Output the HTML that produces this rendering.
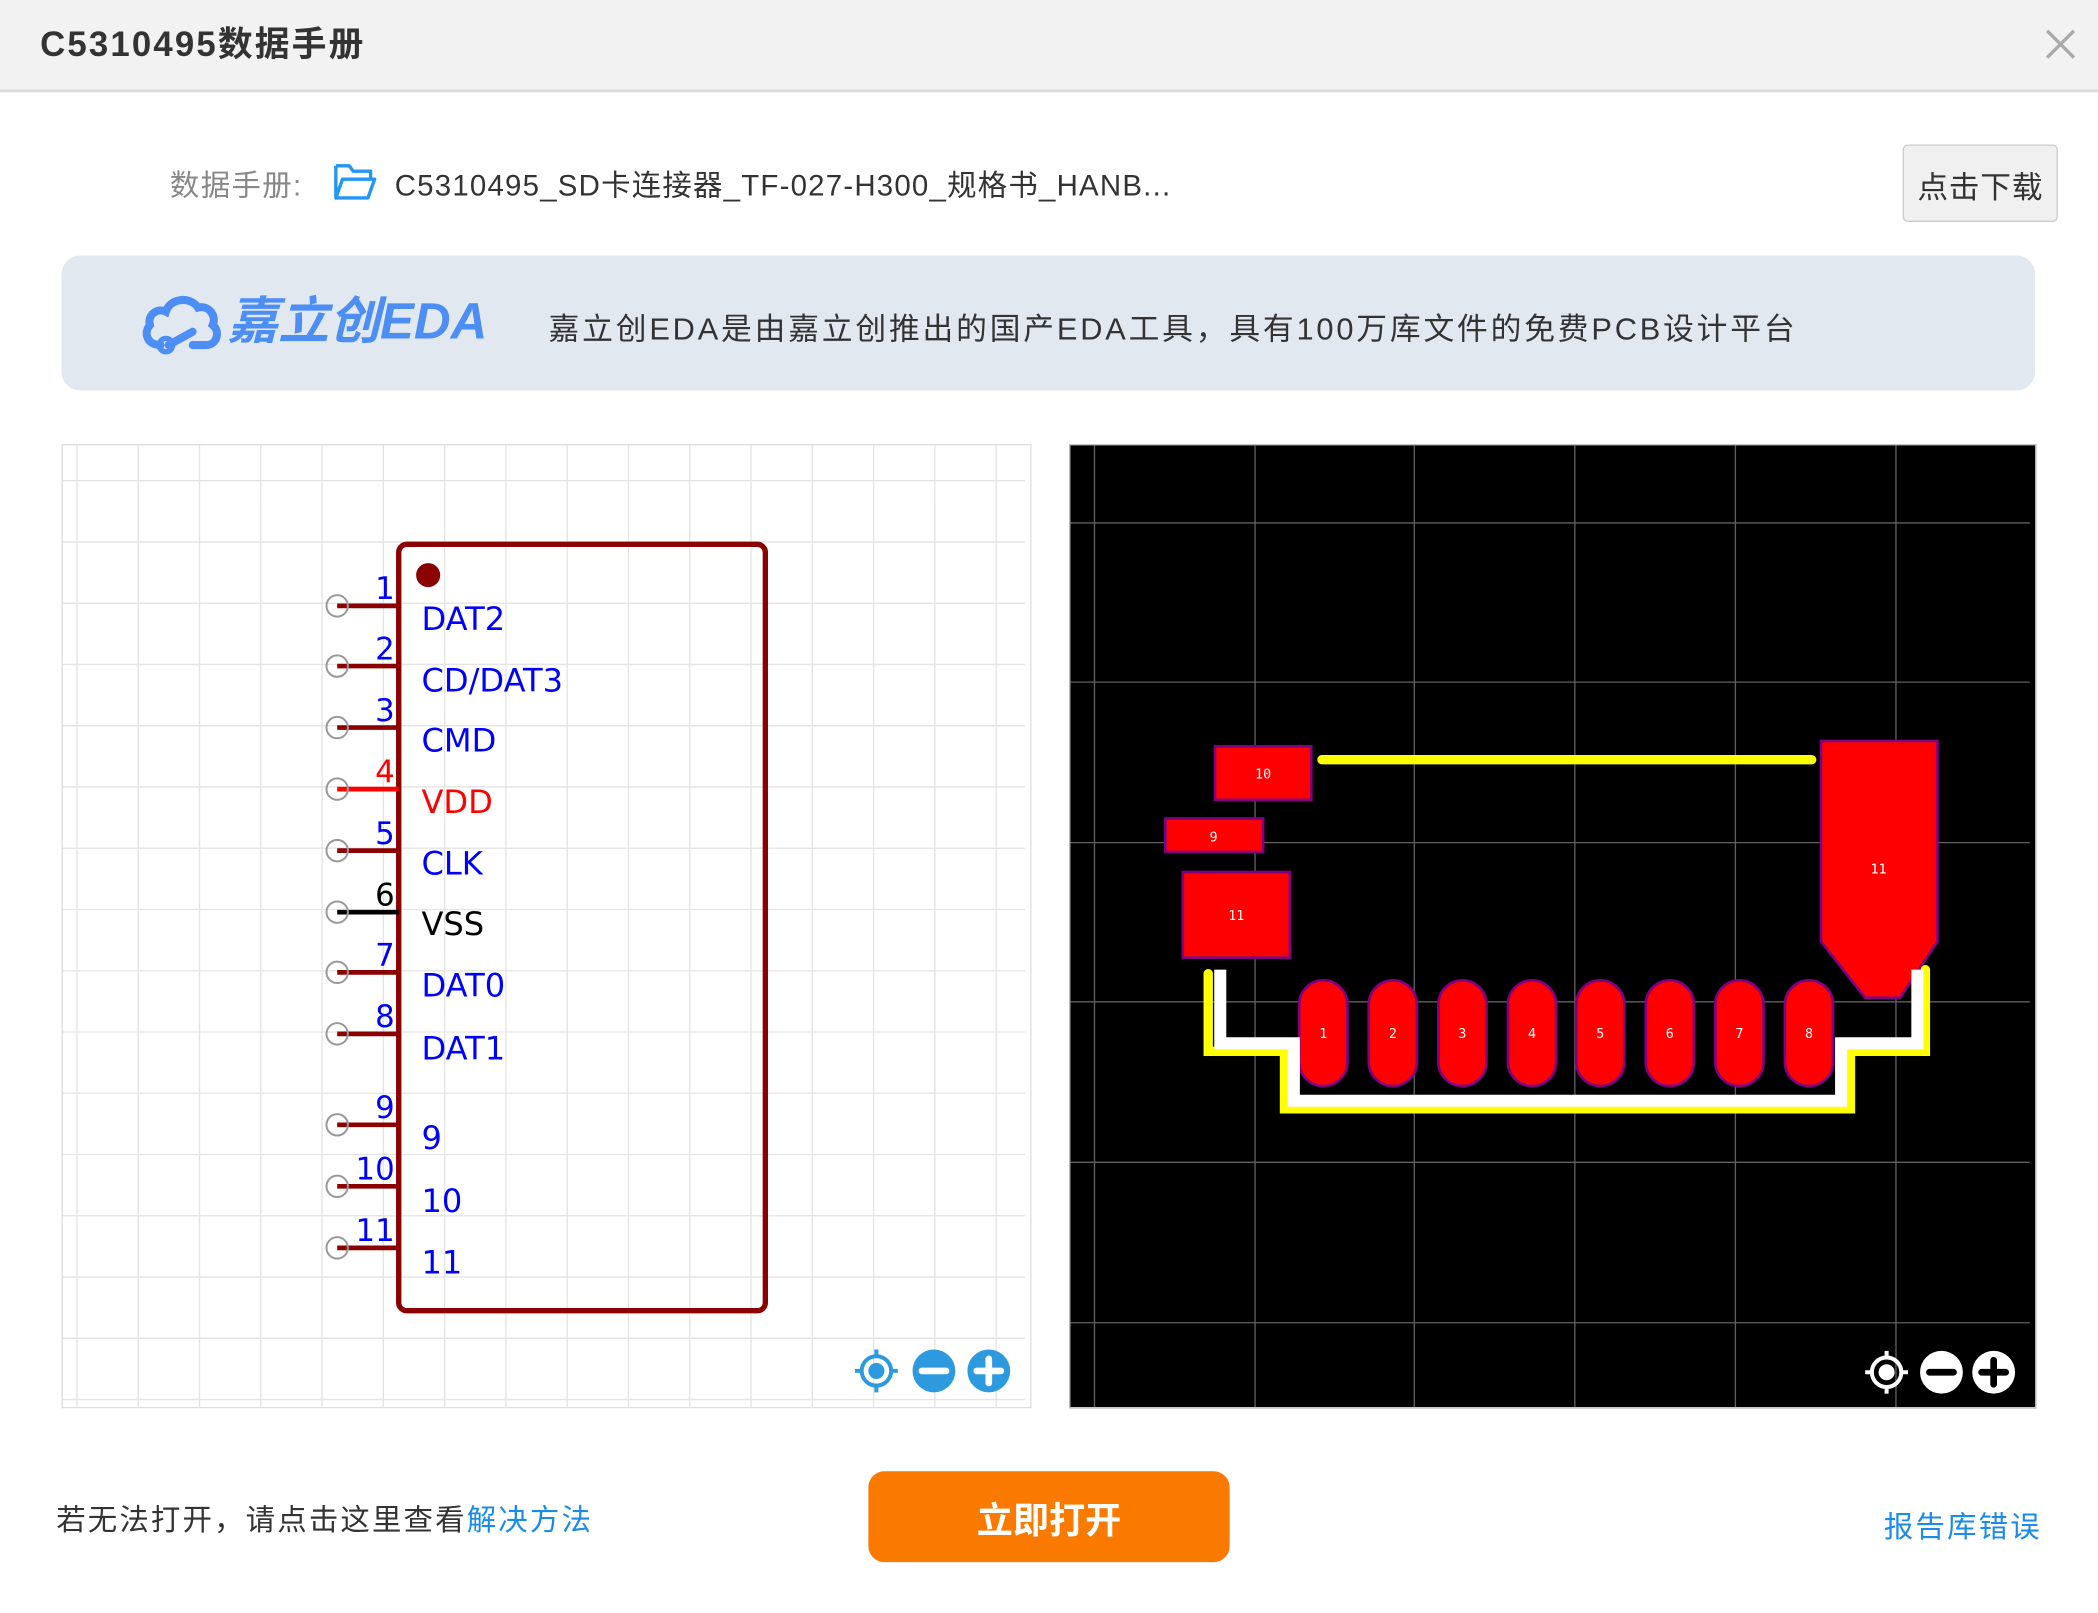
<!DOCTYPE html>
<html><head><meta charset="utf-8"><style>
html,body{margin:0;padding:0;background:#fff;overflow:hidden;width:2098px;height:1613px}
#w{position:absolute;left:0;top:0;width:1568px;height:1206px;transform:scale(1.33801,1.33748);transform-origin:0 0;font-family:"Liberation Sans","Noto Sans CJK SC",sans-serif}
.a{position:absolute;white-space:nowrap}
</style></head><body><div id="w">
<div class="a" style="left:0;top:0;width:1568px;height:67px;background:#f2f2f2;border-bottom:2px solid #dcdcdc"></div>
<div class="a" style="left:30px;top:15px;font-size:26px;font-weight:bold;color:#333;line-height:36px;letter-spacing:1.6px">C5310495数据手册</div>
<svg class="a" style="left:1527px;top:20px" width="26" height="26"><path d="M3 3L23 23M23 3L3 23" stroke="#aaa" stroke-width="2.5"/></svg>

<div class="a" style="left:127px;top:124px;font-size:22px;color:#888;line-height:30px;letter-spacing:1px">数据手册:</div>
<svg class="a" style="left:248px;top:120px" width="36" height="32"><path d="M3 4h10l3 4h13v6M3 4v24h24l5-14H8L3 28" fill="none" stroke="#2196f3" stroke-width="2.5" stroke-linejoin="round"/></svg>
<div class="a" style="left:295px;top:124px;font-size:22px;color:#333;line-height:30px;letter-spacing:0.9px">C5310495_SD卡连接器_TF-027-H300_规格书_HANB...</div>
<div class="a" style="left:1422px;top:108px;width:116px;height:58px;background:#f0f0f0;border:1px solid #ccc;border-radius:4px;box-sizing:border-box;font-size:23px;color:#333;text-align:center;line-height:62px;letter-spacing:0.5px">点击下载</div>

<div class="a" style="left:46px;top:191px;width:1475px;height:101px;background:#e2e8f0;border-radius:14px"></div>
<svg class="a" style="left:104px;top:218px" width="64" height="50"><path d="M16 40C6 40 3 31 8 25C6 17 14 12 20 15C23 5 38 3 44 12C52 10 58 18 55 25C61 30 58 40 50 40H40" fill="none" stroke="#4d8ef5" stroke-width="6" stroke-linecap="round"/><path d="M22 40L40 30" stroke="#4d8ef5" stroke-width="6" stroke-linecap="round"/><circle cx="20" cy="40" r="5" fill="none" stroke="#4d8ef5" stroke-width="4"/></svg>
<div class="a" style="left:170px;top:217px;font-size:38px;font-weight:bold;font-style:italic;color:#4d8ef5;line-height:48px;letter-spacing:0px">嘉立创EDA</div>
<div class="a" style="left:410px;top:231px;font-size:23px;color:#333;line-height:30px;letter-spacing:2.1px">嘉立创EDA是由嘉立创推出的国产EDA工具，具有100万库文件的免费PCB设计平台</div>

<svg class="a" style="left:46px;top:332px" width="725" height="721" font-family="DejaVu Sans,sans-serif">
<rect x="0.5" y="0.5" width="724" height="720" fill="#fff" stroke="#ddd"/>
<g stroke="#e4e4e4" stroke-width="1">
<path d="M11.5 1V720M57.3 1V720M103.1 1V720M148.9 1V720M194.7 1V720M240.5 1V720M286.3 1V720M332.1 1V720M377.9 1V720M423.7 1V720M469.5 1V720M515.3 1V720M561.1 1V720M606.9 1V720M652.7 1V720M698.5 1V720"/>
<path d="M1 27.4H720M1 73.2H720M1 119H720M1 164.8H720M1 210.6H720M1 256.4H720M1 302.2H720M1 348H720M1 393.8H720M1 439.6H720M1 485.4H720M1 531.2H720M1 577H720M1 622.8H720M1 668.6H720M1 714.4H720"/>
</g>
<rect x="252" y="75" width="274" height="573" rx="6" fill="none" stroke="#8b0000" stroke-width="4"/>
<circle cx="274" cy="98" r="9" fill="#8b0000"/>
<g stroke-width="3.5">
<path d="M206 121H252M206 166H252M206 212H252M206 304H252M206 395H252M206 441H252M206 509H252M206 555H252M206 601H252" stroke="#8b0000"/>
<path d="M206 258H252" stroke="#ff0000"/><path d="M206 350H252" stroke="#000"/>
</g>
<g fill="none" stroke="#999" stroke-width="1.5"><circle cx="206" cy="121" r="8"/><circle cx="206" cy="166" r="8"/><circle cx="206" cy="212" r="8"/><circle cx="206" cy="258" r="8"/><circle cx="206" cy="304" r="8"/><circle cx="206" cy="350" r="8"/><circle cx="206" cy="395" r="8"/><circle cx="206" cy="441" r="8"/><circle cx="206" cy="509" r="8"/><circle cx="206" cy="555" r="8"/><circle cx="206" cy="601" r="8"/></g>
<g font-size="23" fill="#0000ff" text-anchor="end">
<text x="249" y="116">1</text><text x="249" y="161">2</text><text x="249" y="207">3</text><text x="249" y="253" fill="#ff0000">4</text><text x="249" y="299">5</text><text x="249" y="345" fill="#000">6</text><text x="249" y="390">7</text><text x="249" y="436">8</text><text x="249" y="504">9</text><text x="249" y="550">10</text><text x="249" y="596">11</text>
</g>
<g font-size="24" fill="#0000ff">
<text x="269" y="139">DAT2</text><text x="269" y="185">CD/DAT3</text><text x="269" y="230">CMD</text><text x="269" y="276" fill="#ff0000">VDD</text><text x="269" y="322">CLK</text><text x="269" y="367" fill="#000">VSS</text><text x="269" y="413">DAT0</text><text x="269" y="460">DAT1</text><text x="269" y="527">9</text><text x="269" y="574">10</text><text x="269" y="620">11</text>
</g>
<g fill="#2d9ae0"><circle cx="609" cy="693" r="11" fill="none" stroke="#2d9ae0" stroke-width="3"/><circle cx="609" cy="693" r="6"/><path d="M609 677v6M609 703v6M593 693h6M619 693h6" stroke="#2d9ae0" stroke-width="3"/>
<circle cx="652" cy="693" r="16"/><circle cx="693" cy="693" r="16"/></g>
<path d="M643 693h18M684 693h18M693 684v18" stroke="#fff" stroke-width="5" stroke-linecap="round"/>
</svg>

<svg class="a" style="left:799px;top:332px" width="723" height="721" font-family="DejaVu Sans Mono,monospace">
<rect x="0" y="0" width="723" height="721" fill="#000"/>
<rect x="0.5" y="0.5" width="722" height="720" fill="none" stroke="#ccc"/>
<g stroke="#606060" stroke-width="1"><path d="M19 1V720M139 1V720M258 1V720M378 1V720M498 1V720M618 1V720M1 59H718M1 178H718M1 298H718M1 417H718M1 537H718M1 657H718"/></g>
<path d="M189 236H555" stroke="#ffff00" stroke-width="7" stroke-linecap="round"/>
<g fill="#ff0000" stroke="#800080" stroke-width="2">
<rect x="109" y="226" width="72" height="40"/><rect x="72" y="280" width="73" height="25"/><rect x="85" y="320" width="80" height="64"/>
<path d="M562 222H649V372L621 414H595L562 372Z"/>
<rect x="172" y="401" width="36" height="79" rx="18"/><rect x="224" y="401" width="36" height="79" rx="18"/><rect x="276" y="401" width="36" height="79" rx="18"/><rect x="328" y="401" width="36" height="79" rx="18"/><rect x="379" y="401" width="36" height="79" rx="18"/><rect x="431" y="401" width="36" height="79" rx="18"/><rect x="483" y="401" width="36" height="79" rx="18"/><rect x="535" y="401" width="36" height="79" rx="18"/>
</g>
<path d="M104 396V454H161V497H584V454H640V393" fill="none" stroke="#ffff00" stroke-width="7" stroke-linejoin="miter" stroke-linecap="round"/>
<path d="M113 393V448H168V491H577V448H634V393" fill="none" stroke="#fff" stroke-width="9"/>
<g fill="#fff" font-size="10" text-anchor="middle">
<text x="145" y="250">10</text><text x="108" y="297">9</text><text x="125" y="356">11</text><text x="605" y="321">11</text>
<text x="190" y="444">1</text><text x="242" y="444">2</text><text x="294" y="444">3</text><text x="346" y="444">4</text><text x="397" y="444">5</text><text x="449" y="444">6</text><text x="501" y="444">7</text><text x="553" y="444">8</text>
</g>
<g fill="#fff"><circle cx="611" cy="694" r="11" fill="none" stroke="#fff" stroke-width="3"/><circle cx="611" cy="694" r="6"/><path d="M611 678v6M611 704v6M595 694h6M621 694h6" stroke="#fff" stroke-width="3"/>
<circle cx="652" cy="694" r="16"/><circle cx="691" cy="694" r="16"/></g>
<path d="M643 694h18M682 694h18M691 685v18" stroke="#000" stroke-width="5" stroke-linecap="round"/>
</svg>

<div class="a" style="left:42px;top:1122px;font-size:22px;color:#333;line-height:30px;letter-spacing:1.6px">若无法打开，请点击这里查看<span style="color:#1a8be8">解决方法</span></div>
<div class="a" style="left:649px;top:1100px;width:270px;height:68px;background:#fa7a00;border-radius:12px;color:#fff;font-size:27px;font-weight:bold;text-align:center;line-height:74px">立即打开</div>
<div class="a" style="left:1408px;top:1127px;font-size:22px;color:#1a8be8;line-height:30px;letter-spacing:1.6px">报告库错误</div>
</div></body></html>
